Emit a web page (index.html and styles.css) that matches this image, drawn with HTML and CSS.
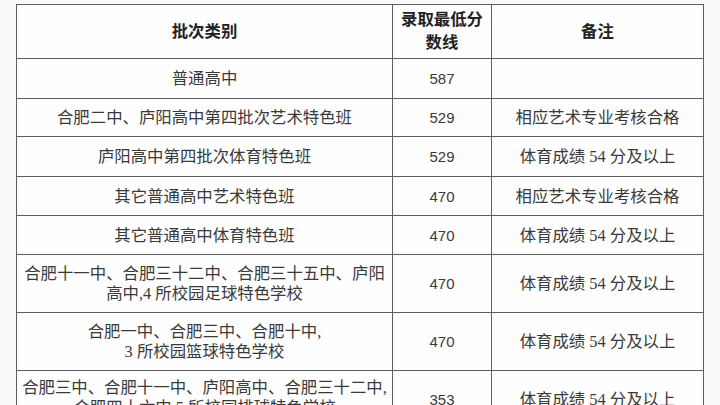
FILE: index.html
```html
<!DOCTYPE html>
<html lang="zh-CN">
<head>
<meta charset="utf-8">
<link rel="stylesheet" href="styles.css">
</head>
<body>
<div class="page">
<table class="score">
  <colgroup>
    <col class="c1"><col class="c2"><col class="c3">
  </colgroup>
  <tr class="h-head">
    <th>批次类别</th>
    <th class="two">录取最低分<br>数线</th>
    <th>备注</th>
  </tr>
  <tr class="h40"><td>普通高中</td><td class="num">587</td><td></td></tr>
  <tr class="h38"><td>合肥二中、庐阳高中第四批次艺术特色班</td><td class="num">529</td><td>相应艺术专业考核合格</td></tr>
  <tr class="h40"><td>庐阳高中第四批次体育特色班</td><td class="num">529</td><td>体育成绩 54 分及以上</td></tr>
  <tr class="h39"><td>其它普通高中艺术特色班</td><td class="num">470</td><td>相应艺术专业考核合格</td></tr>
  <tr class="h39"><td>其它普通高中体育特色班</td><td class="num">470</td><td>体育成绩 54 分及以上</td></tr>
  <tr class="h58"><td class="multi">合肥十一中、合肥三十二中、合肥三十五中、庐阳<br>高中,4 所校园足球特色学校</td><td class="num">470</td><td>体育成绩 54 分及以上</td></tr>
  <tr class="h58"><td class="multi">合肥一中、合肥三中、合肥十中,<br>3 所校园篮球特色学校</td><td class="num">470</td><td>体育成绩 54 分及以上</td></tr>
  <tr class="h58"><td class="multi top">合肥三中、合肥十一中、庐阳高中、合肥三十二中,<br>合肥四十六中,5 所校园排球特色学校</td><td class="num">353</td><td>体育成绩 54 分及以上</td></tr>
</table>
</div>
</body>
</html>
```
FILE: styles.css
```css
html, body {
  margin: 0;
  padding: 0;
  background: #fafafa;
}
.page {
  width: 720px;
  height: 405px;
  overflow: hidden;
  padding: 4px 0 0 16px;
  box-sizing: border-box;
}
.score {
  border-collapse: collapse;
  table-layout: fixed;
  width: 687px;
  background: #fefefe;
  font-family: "Liberation Serif", "Noto Sans CJK SC", serif;
  font-size: 16.4px;
  color: #3a3a3a;
}
.c1 { width: 376px; }
.c2 { width: 99px; }
.c3 { width: 212px; }
.score th, .score td {
  border: 1.6px solid #5c5c5c;
  text-align: center;
  vertical-align: middle;
  padding: 0;
  line-height: 21px;
  white-space: nowrap;
}
.score th {
  font-weight: 700;
  color: #222;
}
.score th.two {
  line-height: 23px;
  padding-bottom: 2px;
}
.score td.num {
  font-family: "Liberation Sans", sans-serif;
  font-size: 15px;
}
.score td.multi {
  line-height: 20px;
}
.score td.top {
  vertical-align: top;
  padding-top: 7px;
}
.h-head { height: 54px; }
.h40 { height: 40px; }
.h38 { height: 38px; }
.h39 { height: 39px; }
.h58 { height: 58px; }
```
